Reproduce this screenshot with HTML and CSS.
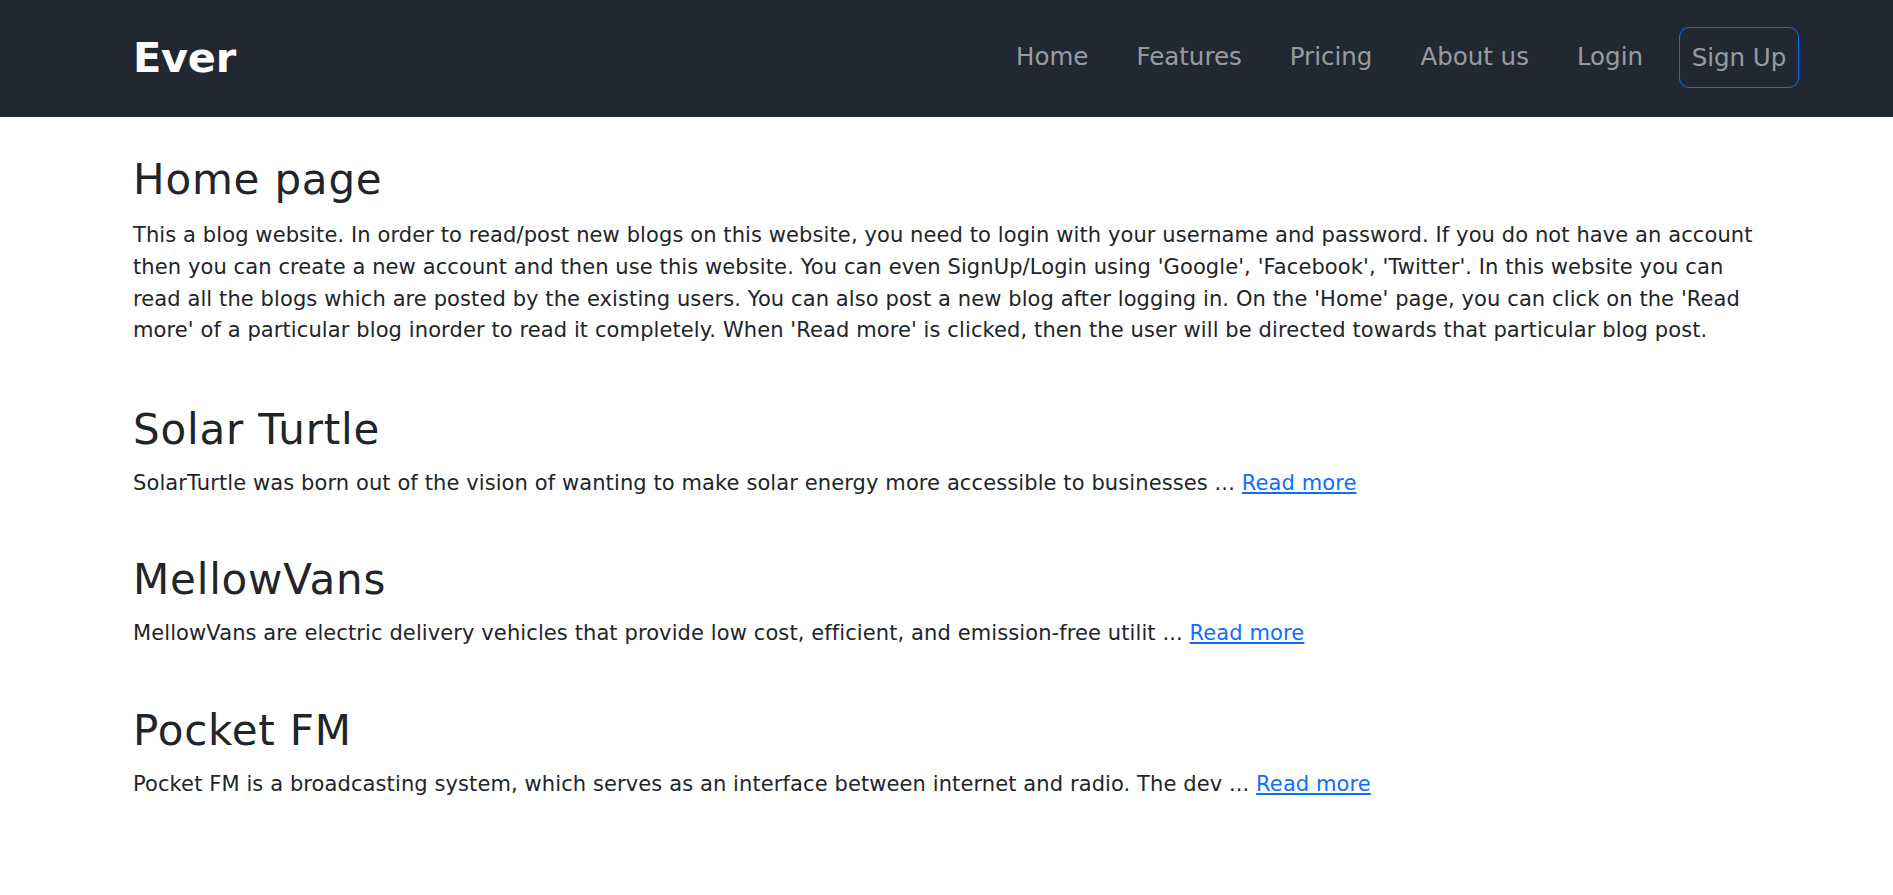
FILE: index.html
```html
<!DOCTYPE html>
<html lang="en">
<head>
<meta charset="utf-8">
<title>Ever</title>
<link rel="stylesheet" href="styles.css">
</head>
<body>
<nav class="navbar">
  <a class="brand" href="#">Ever</a>
  <ul class="nav-links">
    <li><a class="nav-link" href="#">Home</a></li>
    <li><a class="nav-link" href="#">Features</a></li>
    <li><a class="nav-link" href="#">Pricing</a></li>
    <li><a class="nav-link" href="#">About us</a></li>
    <li><a class="nav-link" href="#">Login</a></li>
    <li><a class="nav-link signup" href="#">Sign Up</a></li>
  </ul>
</nav>
<main class="content">
  <section class="section intro">
    <h2 class="title">Home page</h2>
    <p class="text">This a blog website. In order to read/post new blogs on this website, you need to login with your username and password. If you do not have an account<br>then you can create a new account and then use this website. You can even SignUp/Login using 'Google', 'Facebook', 'Twitter'. In this website you can<br>read all the blogs which are posted by the existing users. You can also post a new blog after logging in. On the 'Home' page, you can click on the 'Read<br>more' of a particular blog inorder to read it completely. When 'Read more' is clicked, then the user will be directed towards that particular blog post.</p>
  </section>
  <section class="section post">
    <h2 class="title">Solar Turtle</h2>
    <p class="text">SolarTurtle was born out of the vision of wanting to make solar energy more accessible to businesses ... <a href="#" class="more">Read more</a></p>
  </section>
  <section class="section post">
    <h2 class="title">MellowVans</h2>
    <p class="text">MellowVans are electric delivery vehicles that provide low cost, efficient, and emission-free utilit ... <a href="#" class="more">Read more</a></p>
  </section>
  <section class="section post">
    <h2 class="title">Pocket FM</h2>
    <p class="text">Pocket FM is a broadcasting system, which serves as an interface between internet and radio. The dev ... <a href="#" class="more">Read more</a></p>
  </section>
</main>
</body>
</html>
```
FILE: styles.css
```css
* { box-sizing: border-box; }
html, body { margin: 0; padding: 0; }
body {
  font-family: "DejaVu Sans", "Liberation Sans", sans-serif;
  color: #212529;
  background: #fff;
}
.navbar {
  height: 117px;
  background: #222831;
  display: flex;
  align-items: center;
  justify-content: space-between;
  padding: 0 94px 0 133px;
}
.brand {
  color: #fff;
  font-weight: bold;
  font-size: 41.5px;
  text-decoration: none;
  letter-spacing: -0.3px;
  margin-top: -3px;
}
.nav-links {
  list-style: none;
  margin: 0;
  padding: 0;
  display: flex;
  align-items: center;
  gap: 36px;
}
.nav-link {
  color: rgba(255,255,255,.55);
  font-size: 24.5px;
  text-decoration: none;
  display: block;
  padding: 8px 0;
  margin: -5px 0 0 12px;
}
.signup {
  border: 1.5px solid #0d6efd;
  border-radius: 10px;
  height: 61px;
  width: 120px;
  margin: -2px 0 0 0;
  padding: 0;
  display: flex;
  align-items: center;
  justify-content: center;
}
.content {
  padding: 38px 0 0 133px;
  width: 1760px;
}
.title {
  font-size: 42px;
  font-weight: normal;
  letter-spacing: 0.8px;
  line-height: 1.2;
  margin: 0 0 12.5px;
}
.intro .title { margin-bottom: 15px; }
.text {
  font-size: 21px;
  letter-spacing: 0.1px;
  line-height: 31.6px;
  margin: 0;
}
.intro .text { white-space: nowrap; }
.section { margin-bottom: 56px; }
.intro { margin-bottom: 58px; }
.more { color: #0d6efd; }
```
